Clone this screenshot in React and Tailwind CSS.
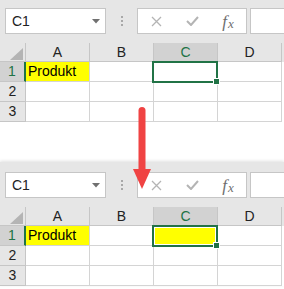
const font = { fontFamily: '"Liberation Sans", Arial, sans-serif' }

function Toolbar() {
  return (
    <div className="h-[45px] flex items-start pt-[10px] pl-[5px]">
      {/* Name box */}
      <div className="w-[101px] h-[26px] border border-[#c6c6c6] bg-white flex items-center pl-[6px] pr-[5px] text-[14px] text-[#222]">
        <span>C1</span>
        <svg className="ml-auto" width="8" height="5" viewBox="0 0 8 5">
          <path d="M0 0 L8 0 L4 4.5 Z" fill="#707070" />
        </svg>
      </div>
      {/* Separator dots */}
      <div className="w-[31px] h-[26px] flex flex-col items-center justify-center gap-[2px]">
        <div className="w-[2px] h-[2px] bg-[#a8a8a8]" />
        <div className="w-[2px] h-[2px] bg-[#a8a8a8]" />
        <div className="w-[2px] h-[2px] bg-[#a8a8a8]" />
      </div>
      {/* Cancel / Enter / fx */}
      <div className="w-[110px] h-[26px] border border-[#c6c6c6] bg-white flex items-center">
        <div className="w-[37px] flex justify-center">
          <svg width="11" height="11" viewBox="0 0 11 11">
            <path d="M1 1 L10 10 M10 1 L1 10" stroke="#b4b4b4" strokeWidth="1.3" />
          </svg>
        </div>
        <div className="w-[37px] flex justify-center">
          <svg width="13" height="10" viewBox="0 0 13 10">
            <path d="M1 5 L5 9 L12 1" stroke="#b4b4b4" strokeWidth="2" fill="none" />
          </svg>
        </div>
        <div
          className="w-[37px] flex justify-center items-baseline text-[17px] italic text-[#6e6e6e] leading-none"
          style={{ fontFamily: '"Liberation Serif", serif' }}
        >
          <span>f</span><span className="text-[13px] ml-[1px] translate-y-[1px]">x</span>
        </div>
      </div>
      {/* Formula bar */}
      <div className="flex-1 ml-[3px] h-[26px] border-y border-l border-[#c6c6c6] bg-white" />
    </div>
  )
}

function Sheet({ filled }) {
  const cols = ['A', 'B', 'C', 'D']
  return (
    <div className="bg-[#e6e6e6]" style={font}>
      <Toolbar />
      {/* Column headers */}
      <div className="flex h-[19px]">
        <div className="w-[26px] h-[19px] border-r border-b border-[#c6c6c6] flex items-end justify-end pr-[2px] pb-[1px]">
          <svg width="13" height="12" viewBox="0 0 13 12">
            <path d="M13 0 L13 12 L0 12 Z" fill="#b4b4b4" />
          </svg>
        </div>
        {cols.map((c) => (
          <div
            key={c}
            className={
              c === 'C'
                ? 'w-[64px] h-[19px] border-r border-b border-[#c6c6c6] bg-[#d2d2d2] flex items-center justify-center text-[14px] text-[#217346]'
                : 'w-[64px] h-[19px] border-r border-b border-[#c6c6c6] flex items-center justify-center text-[14px] text-[#222]'
            }
          >
            {c}
          </div>
        ))}
      </div>
      {/* Rows */}
      {[1, 2, 3].map((r) => (
        <div key={r} className="flex h-[20px]">
          {r === 1 ? (
            <div className="w-[26px] h-[20px] bg-[#d2d2d2] border-r-2 border-r-[#217346] border-b border-b-[#c6c6c6] flex items-center justify-center text-[14px] text-[#217346]">
              1
            </div>
          ) : (
            <div className="w-[26px] h-[20px] border-r border-b border-[#c6c6c6] flex items-center justify-center text-[14px] text-[#222]">
              {r}
            </div>
          )}
          {cols.map((c) => {
            const base = 'relative w-[64px] h-[20px] border-r border-b border-[#d4d4d4] flex items-center text-[14px] text-black'
            if (r === 1 && c === 'A') {
              return (
                <div key={c} className={base + ' bg-[#ffff00] pl-[2px]'}>
                  Produkt
                </div>
              )
            }
            if (r === 1 && c === 'C') {
              return (
                <div key={c} className={base + ' bg-white z-10'}>
                  <div className="absolute -left-[2px] -top-[1px] w-[66px] h-[22px] border-2 border-[#217346]">
                    <div className={filled ? 'w-full h-full border border-white bg-[#ffff00]' : 'w-full h-full bg-white'} />
                    <div className="absolute -right-[4px] -bottom-[4px] w-[7px] h-[7px] bg-[#217346] border border-white" />
                  </div>
                </div>
              )
            }
            return <div key={c} className={base + ' bg-white'} />
          })}
          <div className="flex-1 bg-white" />
        </div>
      ))}
    </div>
  )
}

export default function App() {
  return (
    <div className="relative w-[284px] h-[289px] bg-white overflow-hidden">
      <div className="-mt-[2px]">
        <Sheet filled={false} />
      </div>
      <div className="mt-[40px] shadow-[0_-1px_3px_rgba(0,0,0,0.12)]">
        <Sheet filled />
      </div>
      {/* Red arrow overlay */}
      <svg className="absolute left-[130px] top-[104px] z-20" width="24" height="88" viewBox="130 104 24 88">
        <rect x="138.5" y="107" width="7" height="66" rx="3.5" fill="#f04343" />
        <path d="M133 169 L151 169 L142 189 Z" fill="#f04343" />
      </svg>
    </div>
  )
}
